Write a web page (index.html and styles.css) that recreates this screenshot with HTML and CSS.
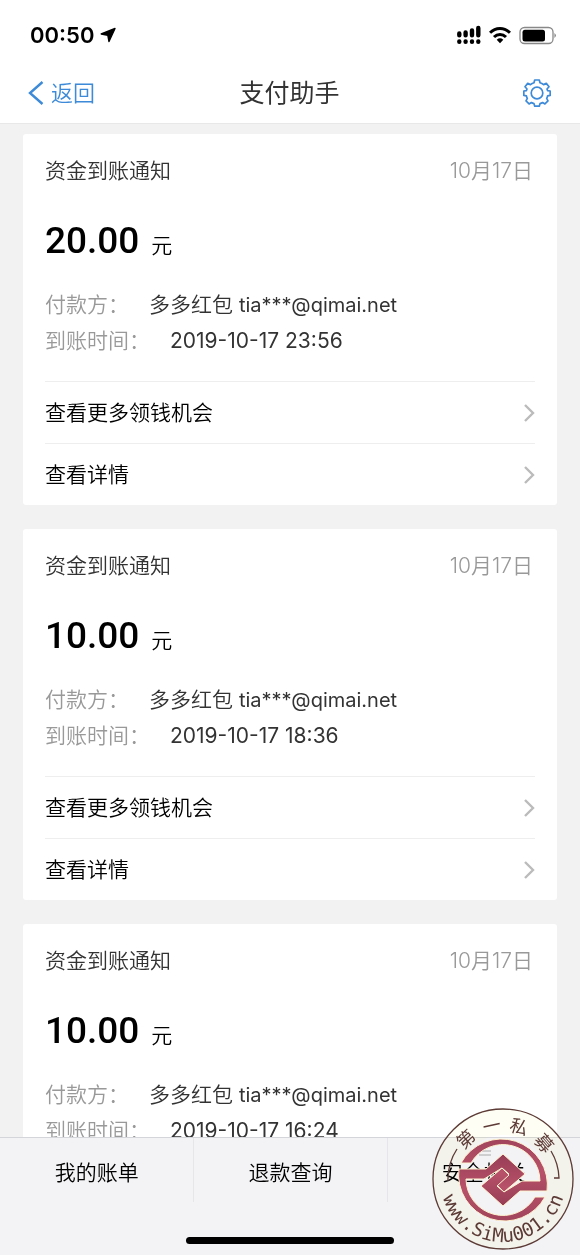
FILE: index.html
```html
<!DOCTYPE html>
<html lang="zh-CN">
<head>
<meta charset="utf-8">
<meta name="viewport" content="width=device-width, initial-scale=1">
<title>支付助手</title>
<link rel="stylesheet" href="styles.css">
</head>
<body>
<div class="screen">
  <header class="header">
    <div class="status">
      <span class="clock">00:50
        <svg width="16" height="16" viewBox="0 0 16 16" aria-hidden="true"><path d="M15 1.500 9 14.500 7.800 8.200 1.200 7Z" fill="#000" stroke="#000" stroke-width="1.400" stroke-linejoin="round"/></svg>
      </span>
      <span class="indicators">
        <svg width="24" height="20" viewBox="0 0 24 20" aria-hidden="true"><g stroke="#000" stroke-width="4.400" stroke-linecap="round"><path d="M2.300 8.500v1.800M8.600 7.500v2.800M15 5.500v4.800M21.300 3v7.300M2.300 16.500v.300M8.600 16.500v.300M15 16.500v.300M21.300 16.500v.300"/></g></svg>
        <svg width="22" height="20" viewBox="0 0 22 20" aria-hidden="true"><g fill="none" stroke="#000" stroke-width="3"><path d="M1 7.800C6.500 1.900 15.500 1.900 21 7.800"/><path d="M5 12C8.500 8.500 13.500 8.500 17 12"/></g><path d="M7.700 14.800Q11 11.900 14.300 14.800L11 18.300Z"/></svg>
        <svg width="37" height="20" viewBox="0 0 37 20" aria-hidden="true"><rect x="1" y="2.500" width="33" height="16" rx="4.500" fill="none" stroke="#888" stroke-width="1.300"/><rect x="3.500" y="4.800" width="22.500" height="11.600" rx="2.500"/><path d="M35.500 8v5q2.600-2.500 0-5Z" fill="#777"/></svg>
      </span>
    </div>
    <nav class="navbar">
      <a class="back" href="#"><svg width="16" height="24" viewBox="0 0 16 24" aria-hidden="true"><path d="M14.500 1 2 12 14.500 23" fill="none" stroke="#3d8ad8" stroke-width="2.400"/></svg>返回</a>
      <h1 class="title">支付助手</h1>
      <button class="settings" type="button" aria-label="设置"><svg width="28" height="28" viewBox="-14 -14 28 28" aria-hidden="true"><g fill="none" stroke="#3d8ad8" stroke-width="1.700" stroke-linejoin="round"><path d="M-2.300-13H2.300L3-10.200Q5-9.700 6.600-8.400L9.300-9.600 12-6.200 10-4Q10.400-3 10.600-2.400L13.200-2V2.300L10.600 2.900Q10.300 4.400 9.700 5.400L11 7.800 7.900 10.900 5.600 9.500Q4.500 10.200 3 10.600L2.300 13.200H-2.300L-3 10.600Q-4.500 10.200-5.600 9.500L-7.900 10.900-11 7.800-9.700 5.400Q-10.300 4.400-10.600 2.900L-13.200 2.300V-2L-10.600-2.400Q-10.400-3-10-4L-12-6.200-9.300-9.600-6.600-8.400Q-5-9.700-3-10.200Z"/><circle r="5.800"/></g></svg></button>
    </nav>
  </header>

  <main class="feed">
    <article class="card">
      <div class="card-head"><h2>资金到账通知</h2><time>10月17日</time></div>
      <p class="amount"><strong>20.00</strong> 元</p>
      <dl class="details">
        <div class="detail"><dt>付款方：</dt><dd>多多红包 <span class="mail">tia***@qimai.net</span></dd></div>
        <div class="detail"><dt>到账时间：</dt><dd class="moment">2019-10-17 23:56</dd></div>
      </dl>
      <a class="row" href="#">查看更多领钱机会<svg width="12" height="20" viewBox="0 0 12 20" aria-hidden="true"><path d="M2 2 10 10 2 18"/></svg></a>
      <a class="row" href="#">查看详情<svg width="12" height="20" viewBox="0 0 12 20" aria-hidden="true"><path d="M2 2 10 10 2 18"/></svg></a>
    </article>
    <article class="card">
      <div class="card-head"><h2>资金到账通知</h2><time>10月17日</time></div>
      <p class="amount"><strong>10.00</strong> 元</p>
      <dl class="details">
        <div class="detail"><dt>付款方：</dt><dd>多多红包 <span class="mail">tia***@qimai.net</span></dd></div>
        <div class="detail"><dt>到账时间：</dt><dd class="moment">2019-10-17 18:36</dd></div>
      </dl>
      <a class="row" href="#">查看更多领钱机会<svg width="12" height="20" viewBox="0 0 12 20" aria-hidden="true"><path d="M2 2 10 10 2 18"/></svg></a>
      <a class="row" href="#">查看详情<svg width="12" height="20" viewBox="0 0 12 20" aria-hidden="true"><path d="M2 2 10 10 2 18"/></svg></a>
    </article>
    <article class="card">
      <div class="card-head"><h2>资金到账通知</h2><time>10月17日</time></div>
      <p class="amount"><strong>10.00</strong> 元</p>
      <dl class="details">
        <div class="detail"><dt>付款方：</dt><dd>多多红包 <span class="mail">tia***@qimai.net</span></dd></div>
        <div class="detail"><dt>到账时间：</dt><dd class="moment">2019-10-17 16:24</dd></div>
      </dl>
    </article>
  </main>

  <footer class="footer">
    <nav class="tabs">
      <a href="#">我的账单</a>
      <a href="#">退款查询</a>
      <a href="#">安全相关</a>
    </nav>
    <div class="home-bar"></div>
  </footer>

  <svg class="seal seal-ring" width="142" height="142" viewBox="-71 -71 142 142" aria-hidden="true">
    <circle r="57" fill="none" stroke="#fffef4" stroke-width="26"/>
  </svg>
  <svg class="seal" width="142" height="142" viewBox="-71 -71 142 142" role="img" aria-label="第一私募 www.SiMu001.cn">
    <defs>
      <path id="arc-bottom" d="M-63 0A63 63 0 0 0 63 0"/>
      <path id="half" d="M-44-10H-17L0-25 22-5 1 13-6 6 6-5-1-11-19 0H-37A37 37 0 0 0 32 18H42A46 46 0 0 1-44-10Z"/>
      <linearGradient id="wine" x1="0" y1="0" x2="0" y2="1"><stop offset="0" stop-color="#973c55"/><stop offset=".5" stop-color="#b8526a"/><stop offset="1" stop-color="#a2445c"/></linearGradient>
    </defs>
    <circle r="70" fill="none" stroke="#5c3a35" stroke-width="1.300"/>
    <path d="M-55 2A55 55 0 0 1-46-30M48-28A56 56 0 0 1 56-1H51" fill="none" stroke="#5c3a35" stroke-width="1.300"/>
    <path d="M-24-28H-12M-24-24H-12" stroke="#aaa" stroke-width="1"/>
    <g fill="url(#wine)" stroke="#fff3cf" stroke-width="1">
      <use href="#half"/>
      <use href="#half" transform="rotate(180 0 1)"/>
    </g>
    <g class="seal-name">
      <text y="-48" transform="rotate(-43)">第</text>
      <text y="-48" transform="rotate(-12)">一</text>
      <text y="-48" transform="rotate(17)">私</text>
      <text y="-48" transform="rotate(49)">募</text>
    </g>
    <text class="seal-url"><textPath href="#arc-bottom" startOffset="50%">www.SiMu001.cn</textPath></text>
  </svg>
</div>
</body>
</html>
```
FILE: styles.css
```css
* { box-sizing: border-box; }
body {
  margin: 0;
  background: #f2f2f2;
  color: #333;
  font-family: Inter, "Noto Sans CJK SC", sans-serif;
  font-size: 21px;
  font-weight: 350;
  line-height: 36px;
}
h1, h2, p, dl, dd { margin: 0; font-weight: inherit; }
a { color: inherit; text-decoration: none; }
svg { display: block; flex: none; }
.screen { position: relative; display: flex; flex-direction: column; height: 100vh; }
.header { background: #fff; border-bottom: 1px solid #e8e8e8; }
.status { display: flex; justify-content: space-between; align-items: center; padding: 17px 24px 7px 30px; }
.clock { display: flex; align-items: center; gap: 6px; color: #000; font-size: 22px; font-weight: 600; }
.indicators { display: flex; align-items: center; gap: 8px; }
.navbar { display: grid; grid-template-columns: 1fr auto 1fr; align-items: center; padding: 13px 29px 10px 28px; line-height: 40px; }
.back { display: flex; align-items: center; gap: 7px; color: #3d8ad8; font-size: 22px; }
.title { font-size: 25px; font-weight: 400; }
.settings { justify-self: end; padding: 0; border: 0; background: none; }
.feed { flex: 1; min-height: 0; overflow: auto; scrollbar-width: none; padding: 10px 23px 0; }
.card { margin-bottom: 24px; padding: 19px 22px 0; border-radius: 3px; background: #fff; }
.card-head { display: flex; justify-content: space-between; }
h2 { font-size: inherit; }
time { padding-right: 2px; color: #999; }
.amount { padding: 26px 0 15px; color: #000; line-height: 52px; }
.amount strong { margin-right: 6px; font-family: Roboto, sans-serif; font-size: 37px; font-weight: 500; }
.details { padding-bottom: 22px; }
.detail { display: flex; gap: 20px; }
dt { color: #999; }
.mail { font-size: 20px; font-weight: 400; }
.moment { font-weight: 400; }
.row { display: flex; justify-content: space-between; align-items: center; padding: 13px 0 12px; border-top: 1px solid #eee; color: #000; }
.row path { fill: none; stroke: #bbb; stroke-width: 2.4; }
.footer { padding-bottom: 11px; border-top: 1px solid #d4d5da; background: #f3f3f6; color: #000; }
.tabs { display: grid; grid-template-columns: repeat(3, 1fr); text-align: center; }
.tabs a { padding: 17px 0 11px; }
.tabs a + a { border-left: 1px solid #e6e6ea; }
.home-bar { width: 36%; height: 7px; margin: 35px auto 0; border-radius: 4px; background: #000; }
.seal { position: absolute; right: 6px; bottom: 5px; }
.seal-ring { mix-blend-mode: multiply; }
.seal text { fill: #5c3a35; text-anchor: middle; }
.seal-name { font: 18px "Noto Sans CJK SC", sans-serif; }
.seal-url { font: 19px "DejaVu Sans Mono", monospace; }
```
